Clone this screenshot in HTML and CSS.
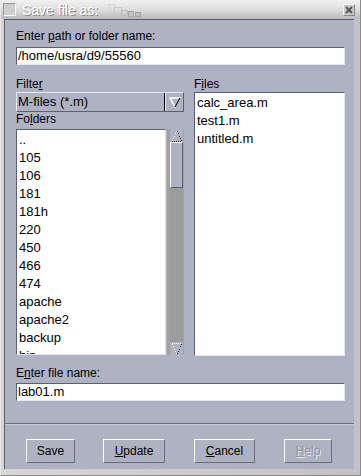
FILE: index.html
```html
<!DOCTYPE html>
<html lang="en">
<head>
  <meta charset="UTF-8">
  <title>Save file as:</title>
  <link rel="stylesheet" href="styles.css">
</head>
<body>
  <div class="window">
    <!-- barre de titre -->
    <div class="titlebar">
      <span class="title-box"></span>
      <span class="title">Save file as:</span>
      <svg class="title-noise" width="40" height="14" viewBox="0 0 40 14">
        <rect x="0.5" y="0.5" width="6" height="5" fill="none" stroke="#d4d4d4"/>
        <rect x="6.5" y="3.5" width="7" height="6" fill="none" stroke="#c8c8c8"/>
        <rect x="13.5" y="6.5" width="6" height="5" fill="none" stroke="#bcbcbc"/>
        <rect x="20.5" y="7.5" width="5" height="5" fill="#c4c4c4" stroke="#a8a8a8"/>
        <rect x="27.5" y="8.5" width="5" height="4" fill="#c0c0c0" stroke="#a4a4a4"/>
      </svg>
      <span class="close">
        <svg width="10" height="10" viewBox="0 0 10 10">
          <path d="M2 2 L8 8 M8 2 L2 8" stroke="#555" stroke-width="2"/>
        </svg>
      </span>
    </div>

    <div class="content">
      <label class="lbl">Enter <u>p</u>ath or folder name:</label>
      <div class="field">/home/usra/d9/55560</div>

      <div class="columns">
        <div class="col-left">
          <label class="lbl lbl-filter">Filte<u>r</u></label>
          <div class="combo">
            <span class="combo-text">M-files (*.m)</span>
            <span class="combo-btn">
              <svg width="12" height="11" viewBox="0 0 12 11">
                <path d="M1 1 L11 1 L6 10 Z" fill="none" stroke="#fff" stroke-width="1.5"/>
                <path d="M11 1 L6 10" stroke="#222" stroke-width="1.5"/>
              </svg>
            </span>
          </div>
          <label class="lbl lbl-folders">Fo<u>l</u>ders</label>
          <div class="listwrap">
            <ul class="list folders">
              <li>..</li>
              <li>105</li>
              <li>106</li>
              <li>181</li>
              <li>181h</li>
              <li>220</li>
              <li>450</li>
              <li>466</li>
              <li>474</li>
              <li>apache</li>
              <li>apache2</li>
              <li>backup</li>
              <li>bin</li>
            </ul>
            <div class="scrollbar">
              <span class="arrow">
                <svg width="12" height="12" viewBox="0 0 12 12" shape-rendering="crispEdges">
                  <path d="M6 1 L1 11" stroke="#fff" stroke-dasharray="1 1"/>
                  <path d="M6 1 L11 11 M1 11.5 L11 11.5" stroke="#222" stroke-dasharray="1 1"/>
                </svg>
              </span>
              <span class="track">
                <span class="thumb"></span>
              </span>
              <span class="arrow">
                <svg width="12" height="12" viewBox="0 0 12 12" shape-rendering="crispEdges">
                  <path d="M1 0.5 L11 0.5 M1 1 L6 11" stroke="#fff" stroke-dasharray="1 1"/>
                  <path d="M11 1 L6 11" stroke="#222" stroke-dasharray="1 1"/>
                </svg>
              </span>
            </div>
          </div>
        </div>
        <div class="col-right">
          <label class="lbl lbl-files">F<u>i</u>les</label>
          <ul class="list files">
            <li>calc_area.m</li>
            <li>test1.m</li>
            <li>untitled.m</li>
          </ul>
        </div>
      </div>

      <label class="lbl lbl-name">E<u>n</u>ter file name:</label>
      <div class="field">lab01.m</div>

      <div class="separator"></div>

      <div class="buttons">
        <button class="btn btn-save">Save</button>
        <button class="btn btn-update"><u>U</u>pdate</button>
        <button class="btn btn-cancel"><u>C</u>ancel</button>
        <button class="btn btn-help" disabled><u>H</u>elp</button>
      </div>
    </div>
  </div>
</body>
</html>
```

FILE: styles.css
```css
body {
  margin: 0;
  font-family: "Liberation Sans", Arial, sans-serif;
  font-size: 12px;
  color: #000;
  background: #c6c6c6;
}
.window {
  width: 361px;
  height: 476px;
  box-sizing: border-box;
  display: flex;
  flex-direction: column;
  background: linear-gradient(90deg, #d6d6d6, #c2c2c2);
  border-left: 1px solid #e8e8e8;
  border-right: 1px solid #8a8a8a;
  border-bottom: 1px solid #8a8a8a;
}
.titlebar {
  height: 19px;
  display: flex;
  align-items: center;
  background: linear-gradient(180deg, #f2f2f2 0%, #dcdcdc 55%, #b8b8b8 100%);
}
.title-box {
  width: 13px;
  height: 13px;
  margin-left: 2px;
  box-sizing: border-box;
  border: 1px solid #9a9a9a;
  border-right-color: #f8f8f8;
  border-bottom-color: #f8f8f8;
  background: #cfcfcf;
}
.title {
  margin-left: 6px;
  font-size: 14px;
  color: #fff;
  text-shadow: 1px 1px 0 #8a8a8a;
}
.title-noise {
  margin-left: 10px;
  margin-top: 2px;
}
.close {
  margin-left: auto;
  margin-right: 5px;
  width: 12px;
  height: 12px;
  box-sizing: border-box;
  border: 1px solid #f4f4f4;
  border-right-color: #888;
  border-bottom-color: #888;
  background: #c8c8c8;
  display: flex;
  align-items: center;
  justify-content: center;
}
.content {
  flex: 1;
  margin: 0 6px 6px 3px;
  background: #aeb2c3;
  border-top: 1px solid #5c5f6c;
  border-left: 1px solid #5c5f6c;
  padding: 9px 9px 0 11px;
  display: flex;
  flex-direction: column;
}
.lbl {
  display: block;
  line-height: 15px;
  margin-bottom: 3px;
}
.field {
  height: 18px;
  box-sizing: border-box;
  background: #fff;
  border-top: 1px solid #5c5f6c;
  border-left: 1px solid #5c5f6c;
  border-right: 1px solid #e4e6ee;
  border-bottom: 1px solid #e4e6ee;
  padding-left: 1px;
  line-height: 16px;
  font-size: 13px;
}
.columns {
  display: flex;
  gap: 10px;
  margin-top: 12px;
}
.col-left {
  width: 168px;
  display: flex;
  flex-direction: column;
}
.col-right {
  flex: 1;
  display: flex;
  flex-direction: column;
}
.lbl-filter,
.lbl-files {
  margin-bottom: 0;
}
.lbl-folders {
  margin-bottom: 2px;
}
.combo {
  height: 20px;
  box-sizing: border-box;
  display: flex;
  border: 1px solid #e6e8ef;
  border-right-color: #5c5f6c;
  border-bottom-color: #5c5f6c;
}
.combo-text {
  flex: 1;
  padding-left: 1px;
  line-height: 18px;
  font-size: 13px;
  border-right: 1px solid #000;
}
.combo-btn {
  width: 17px;
  display: flex;
  align-items: center;
  justify-content: center;
  border-left: 1px solid #e6e8ef;
}
.listwrap {
  display: flex;
  height: 226px;
}
.list {
  list-style: none;
  margin: 0;
  padding: 0 0 0 2px;
  background: #fff;
  border-top: 1px solid #5c5f6c;
  border-left: 1px solid #5c5f6c;
  border-right: 1px solid #e4e6ee;
  border-bottom: 1px solid #e4e6ee;
  overflow: hidden;
  font-size: 13px;
}
.list li {
  line-height: 18px;
}
.folders {
  flex: 1;
  padding-top: 1px;
}
.files {
  height: 264px;
  box-sizing: border-box;
  padding-top: 1px;
}
.scrollbar {
  width: 17px;
  box-sizing: border-box;
  background: #8c8c8c;
  border-left: 3px solid #a2a2a2;
  border-right: 1px solid #a2a2a2;
  display: flex;
  flex-direction: column;
  margin-left: 1px;
}
.arrow {
  height: 13px;
  display: flex;
  align-items: center;
  justify-content: center;
  background: #aeb2c3;
}
.track {
  flex: 1;
  background: #9c9c9c;
}
.thumb {
  display: block;
  height: 46px;
  box-sizing: border-box;
  background: #aeb2c3;
  border: 1px solid #fff;
  border-right-color: #5c5f6c;
  border-bottom-color: #5c5f6c;
}
.lbl-name {
  margin-top: 10px;
  margin-bottom: 2px;
}
.separator {
  margin: 22px -9px 0 -11px;
  border-top: 1px solid #6a6d7a;
  border-bottom: 1px solid #c8cbd6;
}
.buttons {
  display: flex;
  padding: 14px 0 0 10px;
}
.btn {
  height: 24px;
  box-sizing: border-box;
  background: #aeb2c3;
  border: 1px solid #fff;
  border-right-color: #6a6d7a;
  border-bottom-color: #6a6d7a;
  font-family: "Liberation Sans", Arial, sans-serif;
  font-size: 12px;
  color: #000;
  padding: 0;
}
.btn-save { width: 49px; }
.btn-update { width: 62px; margin-left: 28px; }
.btn-cancel { width: 61px; margin-left: 29px; }
.btn-help {
  width: 48px;
  margin-left: 29px;
  color: #8e92a2;
  text-shadow: 1px 1px 0 #e8eaf0;
}
```
